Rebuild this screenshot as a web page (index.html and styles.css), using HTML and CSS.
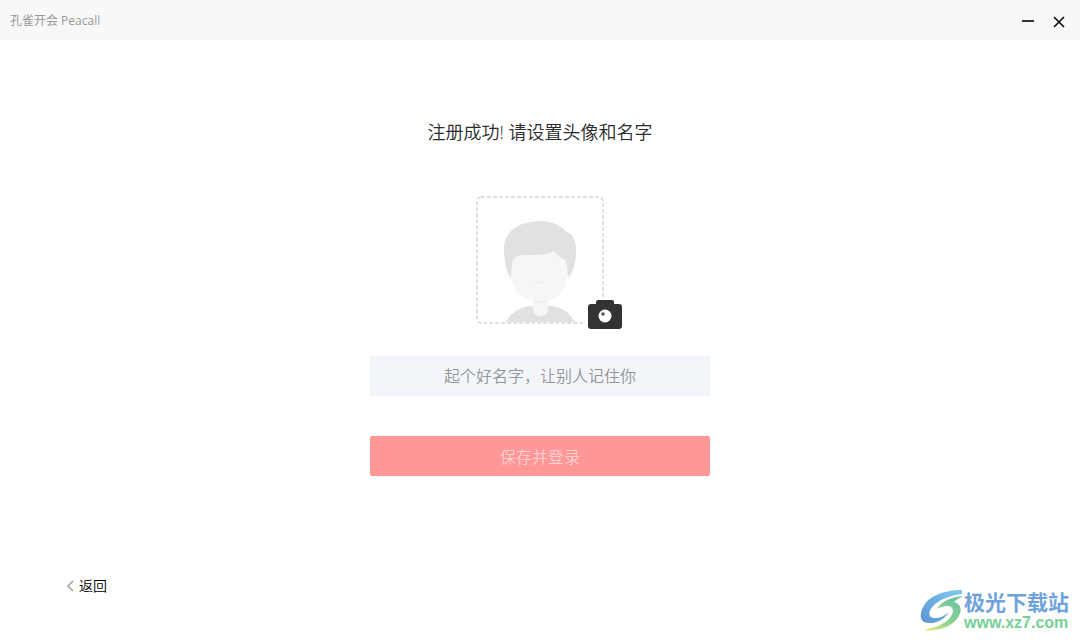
FILE: index.html
```html
<!DOCTYPE html>
<html lang="zh-CN">
  <head>
    <meta charset="UTF-8" />
    <meta name="viewport" content="width=device-width, initial-scale=1.0" />
    <title>孔雀开会 Peacall</title>
    <link rel="stylesheet" href="styles.css">
  </head>
  <body>
    <header class="titlebar">
      <span class="app-name">孔雀开会 Peacall</span>
      <div class="window-buttons">
        <button type="button" class="window-button" aria-label="最小化">
          <svg width="14" height="14" viewBox="0 0 14 14">
            <path d="M1 7h12" stroke="#333" stroke-width="2" />
          </svg>
        </button>
        <button type="button" class="window-button" aria-label="关闭">
          <svg width="14" height="14" viewBox="0 0 14 14">
            <path d="M2 3l10 10M12 3L2 13" stroke="#000" stroke-width="1.5" />
          </svg>
        </button>
      </div>
    </header>

    <main class="content">
      <h1 class="heading">注册成功! 请设置头像和名字</h1>
      <form class="profile">
        <div class="avatar">
          <svg class="avatar-picture" viewBox="0 0 128 128">
            <path d="M30 126C34 118 43 110 57 110H73C86 110 95 118 99 126Z" fill="#e1e1e1" />
            <rect x="1" y="1" width="126" height="126" rx="4" fill="none" stroke="#fff" stroke-width="2" />
            <rect x="1" y="1" width="126" height="126" rx="4" fill="none" stroke="#e1e1e1" stroke-width="2" stroke-dasharray="4 2" />
            <path d="M57 102H72V112C72 123 57 123 57 112Z" fill="#f6f6f6" />
            <path d="M57 104q8 2 15 0v2q-8 1-15 0z" fill="#eeeeee" />
            <path d="M30 72q2 12 7 14l-1-16zM98 72q-2 12-6 14v-16z" fill="#fafafa" />
            <path d="M36 64L46 54H80L91 64V82C90 97 79 105 64 105S37 97 36 82Z" fill="#f6f6f6" />
            <path d="M35 82C30 76 28 64 28 52C28 35 44 25 64 25C77 25 84 29 91 36C98 39 100 46 100 54C100 66 98 76 92 81C91 75 92 67 89 64C85 62 81 59 78 55C72 58 67 59 61 59H48C41 59 36 62 36 69Z" fill="#e1e1e1" />
            <path d="M59 86q4 2 9 0" fill="none" stroke="#ececec" stroke-width="1.2" />
          </svg>
          <button type="button" class="camera" aria-label="设置头像">
            <svg width="34" height="29" viewBox="0 0 34 29">
              <path d="M3 4H8V2Q8 0 10 0H24Q26 0 26 2V4H31Q34 4 34 7V26Q34 29 31 29H3Q0 29 0 26V7Q0 4 3 4Z" fill="#333" />
              <circle cx="17" cy="16" r="6.5" fill="#fff" />
              <circle cx="15" cy="14" r="1.8" fill="#555" />
            </svg>
          </button>
        </div>
        <input class="name" type="text" aria-label="名字" placeholder="起个好名字，让别人记住你" />
        <button type="submit" class="save" disabled>保存并登录</button>
      </form>
    </main>

    <footer class="footer">
      <a class="back" href="#">
        <svg width="9" height="12" viewBox="0 0 9 12">
          <path d="M8 1L3 6l5 5" fill="none" stroke="#a0a4ab" stroke-width="1.6" />
        </svg>
        返回
      </a>
    </footer>

    <div class="watermark">
      <svg width="44" height="42" viewBox="0 0 44 42">
        <defs>
          <linearGradient id="blue" x1="0" y1="1" x2="1" y2="0">
            <stop offset="0" stop-color="#5b93d3" />
            <stop offset="1" stop-color="#80cbf2" />
          </linearGradient>
          <linearGradient id="green" x1="0" y1="1" x2="1" y2="0">
            <stop offset="0" stop-color="#f3e978" />
            <stop offset="0.4" stop-color="#8ed68c" />
            <stop offset="1" stop-color="#66bda8" />
          </linearGradient>
        </defs>
        <path d="M42 0C25 0 10 6 5 14C0 21 -1 29 4 32C11 35 23 32 29 22C23 28 13 30 10 26C7 19 18 7 42 4Z" fill="url(#blue)" />
        <path d="M43 6C32 7 21 11 17 19C22 16 29 15 31 17C36 21 31 30 20 35C14 38 9 38 4 40C14 42 29 38 36 30C43 22 42 14 34 12C36 10 39 8 43 6Z" fill="url(#green)" />
      </svg>
      <div class="watermark-text">
        <span class="watermark-name">极光下载站</span>
        <span class="watermark-url">www.xz7.com</span>
      </div>
    </div>
  </body>
</html>
```
FILE: styles.css
```css
* {
  box-sizing: border-box;
}
body {
  display: flex;
  flex-direction: column;
  min-height: 100vh;
  margin: 0;
  background-color: #fff;
  font-family: "Open Sans", "Noto Sans CJK SC", sans-serif;
  font-weight: 350;
}
button {
  padding: 0;
  border: none;
  background: none;
  font-family: inherit;
  font-weight: inherit;
  cursor: pointer;
}
svg {
  display: block;
}
.titlebar {
  display: flex;
  align-items: center;
  justify-content: space-between;
  height: 40px;
  padding: 2px 14px 0 10px;
  background-color: #f8f8f8;
}
.app-name {
  color: #999;
  font-size: 12px;
  font-weight: 400;
  line-height: 16px;
}
.window-buttons {
  display: flex;
  gap: 17px;
}
.content {
  display: flex;
  flex: 1;
  flex-direction: column;
  align-items: center;
  padding-top: 80px;
}
.heading {
  margin: 0;
  color: #2b2b2b;
  font-size: 18px;
  font-weight: inherit;
  line-height: 24px;
}
.profile {
  display: flex;
  flex-direction: column;
  align-items: center;
  width: 340px;
  margin-top: 52px;
}
.avatar {
  position: relative;
  width: 128px;
  height: 128px;
  margin-bottom: 32px;
}
.camera {
  position: absolute;
  right: -21px;
  bottom: -8px;
  padding: 3px;
  background-color: #fff;
}
.name {
  width: 100%;
  height: 40px;
  padding: 0 10px;
  border: none;
  border-radius: 2px;
  background-color: #f2f6fb;
  color: #333;
  font-family: inherit;
  font-size: 16px;
  font-weight: inherit;
  text-align: center;
}
.name::placeholder {
  color: #949494;
}
.save {
  width: 100%;
  height: 40px;
  margin-top: 40px;
  border-radius: 2px;
  background-color: #ff9797;
  color: #ffd0d0;
  font-size: 16px;
}
.footer {
  padding: 0 65px 43px;
}
.back {
  display: inline-flex;
  align-items: center;
  gap: 5px;
  color: #000;
  font-size: 14px;
  line-height: 20px;
  text-decoration: none;
}
.watermark {
  position: absolute;
  right: 11px;
  bottom: 8px;
  display: flex;
  align-items: center;
}
.watermark-text {
  display: flex;
  flex-direction: column;
}
.watermark-name {
  color: #6fa3dc;
  font-size: 21px;
  font-weight: 700;
  line-height: 24px;
}
.watermark-url {
  color: #75cf96;
  font-family: "Liberation Sans", sans-serif;
  font-size: 16px;
  font-weight: 700;
  line-height: 18px;
}
```
